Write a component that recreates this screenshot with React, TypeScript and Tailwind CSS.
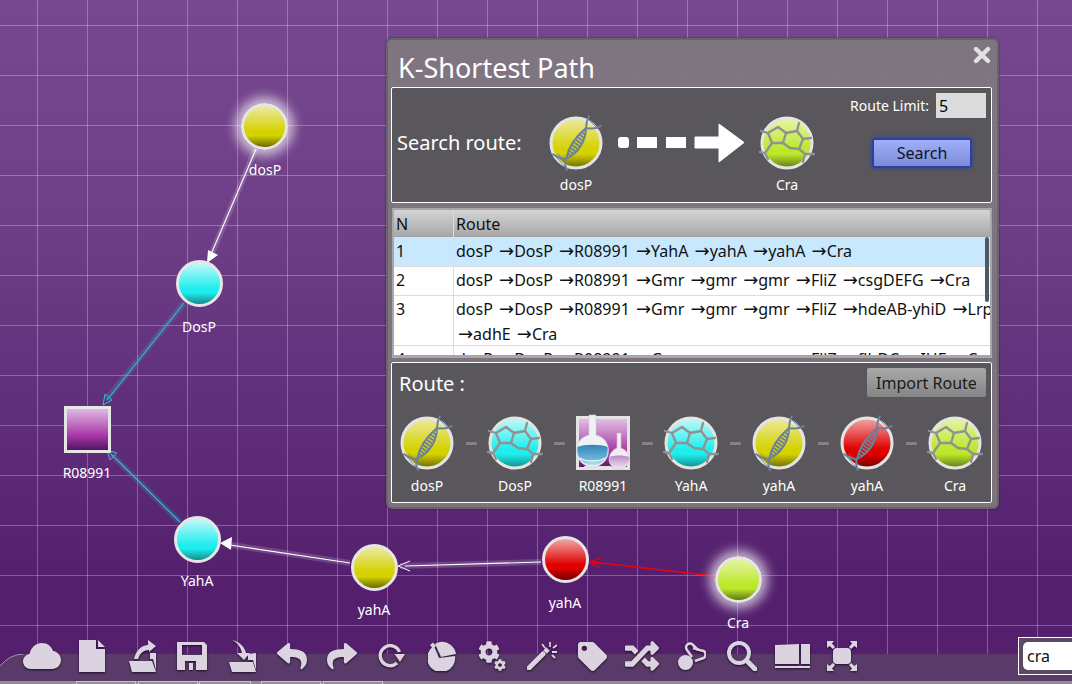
import React from 'react';
import { FaCog, FaRandom, FaReply, FaShare, FaTag } from 'react-icons/fa';

type Kind = 'gene' | 'protein';

const palette: Record<string, string[]> = {
  yellow: ['#ece9a4', '#d5d200', '#d5d200', '#6b6800'],
  cyan: ['#c4f8f8', '#20eeee', '#20eeee', '#148a8a'],
  red: ['#f0a8a8', '#e00000', '#e00000', '#700000'],
  lime: ['#e6f4a8', '#bce82c', '#bce82c', '#5f7a10'],
};

const DnaOverlay = ({ id }: { id: string }) => (
  <g fill="none" stroke="#6d8098" strokeWidth="1.9" strokeLinecap="round">
    <defs>
      <pattern id={id} width="3.2" height="3.2" patternUnits="userSpaceOnUse" patternTransform="rotate(35)">
        <rect width="3.2" height="1" fill="#6d8098" />
      </pattern>
    </defs>
    <path d="M17 43C19 33 26 21 37 12C37 24 30 37 17 43Z" fill={`url(#${id})`} stroke="none" />
    <path d="M4 38C9 42 13 43 17 43C19 33 26 21 37 12C42 13 47 13 52 10" />
    <path d="M18 54C16 50 16 46 17 43C30 37 37 24 37 12C37 8 38 4 40 0" />
    <path d="M6 40L17 52M9 38L19 49" strokeWidth="0.9" />
    <path d="M40 4L49 13" strokeWidth="0.9" />
  </g>
);

const HexOverlay = () => (
  <g fill="none" stroke="#909192" strokeWidth="2.3" strokeLinejoin="round" strokeLinecap="round">
    <path d="M8 17L18 11L26 17L23 27L12 27Z" />
    <path d="M26 17L37 15L43 23L39 33L30 32L23 27" />
    <path d="M8 17L1 15M37 15L39 7M43 23L51 22M12 27L5 37L0 36M5 37L8 43M39 33L45 38L54 38M45 38L43 46" />
  </g>
);

const PathwayIcon = ({ color, kind, uid }: { color: string; kind: Kind; uid: string }) => {
  const c = palette[color];
  return (
    <svg width="54" height="54" viewBox="0 0 54 54" className="overflow-visible">
      <defs>
        <linearGradient id={`g-${uid}`} x1="0" y1="0" x2="0" y2="1">
          <stop offset="0" stopColor={c[0]} />
          <stop offset="0.62" stopColor={c[1]} />
          <stop offset="0.72" stopColor={c[2]} />
          <stop offset="1" stopColor={c[3]} />
        </linearGradient>
      </defs>
      <circle cx="27" cy="27" r="25" fill={`url(#g-${uid})`} stroke="#e4e4e4" strokeWidth="3" />
      {kind === 'gene' ? <DnaOverlay id={`h-${uid}`} /> : <HexOverlay />}
    </svg>
  );
};

const FlaskIcon = () => (
  <svg width="54" height="54" viewBox="0 0 54 54" className="overflow-visible">
    <defs>
      <linearGradient id="reaction-bg" x1="0" y1="0" x2="0" y2="1">
        <stop offset="0" stopColor="#e6c4e6" />
        <stop offset="0.65" stopColor="#a53aa5" />
        <stop offset="1" stopColor="#5a1a60" />
      </linearGradient>
      <linearGradient id="flask-liquid" x1="0" y1="0" x2="0" y2="1">
        <stop offset="0" stopColor="#2f86b8" />
        <stop offset="0.7" stopColor="#70b4d8" />
        <stop offset="1" stopColor="#cfe6f0" />
      </linearGradient>
      <linearGradient id="flask-purple" x1="0" y1="0" x2="0" y2="1">
        <stop offset="0" stopColor="#b888c4" />
        <stop offset="1" stopColor="#efe0f0" />
      </linearGradient>
    </defs>
    <rect x="1.5" y="1.5" width="51" height="51" fill="url(#reaction-bg)" stroke="#e4e4e4" strokeWidth="3" />
    <path d="M8 50H36L34 54H10Z" fill="#e4e4e4" />
    <path d="M13 -1H20V19C28 21 32.5 27 32.5 35C32.5 44 25 51 16.5 51C8 51 0.5 44 0.5 35C0.5 27 5 21 13 19Z" fill="#eef2f5" stroke="#c8d0d6" strokeWidth="0.6" />
    <path d="M1.5 31C8 28 25 28 31.5 31C33 42 25 49.5 16.5 49.5C8 49.5 0 42 1.5 31Z" fill="url(#flask-liquid)" />
    <path d="M4 42C9 46 24 46 29 42" fill="none" stroke="#e8f4fa" strokeWidth="1.4" />
    <path d="M41 17H45V32C50 34 53.5 38 53.5 43C53.5 49 48.5 53 43 53C37.5 53 33 49 33 43C33 38 36.5 34 41 32Z" fill="#f3ecf4" stroke="#cdbfd2" strokeWidth="0.6" />
    <path d="M33.5 41C38 39 48 39 53 41C53.5 48 48 52 43 52C38 52 33 48 33.5 41Z" fill="url(#flask-purple)" />
  </svg>
);

const canvasNodes = [
  { label: 'dosP', pos: 'left-[241px] top-[103px]', fill: 'bg-[linear-gradient(#ece9a4,#d5d200_62%,#d5d200_72%,#6b6800)]', glow: true, labelPos: 'left-[225px] top-[160px]' },
  { label: 'DosP', pos: 'left-[176px] top-[260px]', fill: 'bg-[linear-gradient(#c4f8f8,#20eeee_62%,#20eeee_72%,#148a8a)]', glow: false, labelPos: 'left-[159px] top-[317px]' },
  { label: 'YahA', pos: 'left-[174px] top-[516px]', fill: 'bg-[linear-gradient(#c4f8f8,#20eeee_62%,#20eeee_72%,#148a8a)]', glow: false, labelPos: 'left-[157px] top-[571px]' },
  { label: 'yahA', pos: 'left-[351px] top-[544px]', fill: 'bg-[linear-gradient(#ece9a4,#d5d200_62%,#d5d200_72%,#6b6800)]', glow: false, labelPos: 'left-[334px] top-[600px]' },
  { label: 'yahA', pos: 'left-[542px] top-[536px]', fill: 'bg-[linear-gradient(#f0a8a8,#e00000_62%,#e00000_72%,#700000)]', glow: false, labelPos: 'left-[525px] top-[593px]' },
  { label: 'Cra', pos: 'left-[715px] top-[556px]', fill: 'bg-[linear-gradient(#e6f4a8,#bce82c_62%,#bce82c_72%,#5f7a10)]', glow: true, labelPos: 'left-[698px] top-[613px]' },
];

const Edges = () => (
  <svg width="1072" height="684" className="absolute inset-0" fill="none">
    <g strokeOpacity="0.16" strokeWidth="6">
      <path d="M256 148L210 258" stroke="#fff" />
      <path d="M184 303L106 400" stroke="#40d0e0" />
      <path d="M180 522L110 453" stroke="#40d0e0" />
      <path d="M350 563L225 544" stroke="#fff" />
      <path d="M541 562L400 566" stroke="#fff" />
    </g>
    <path d="M256 149L212 252" stroke="#fff" strokeWidth="1.1" />
    <path d="M207 263L208 250L218 255Z" fill="#fff" />
    <path d="M184 303L107 400" stroke="#1fc6d6" strokeWidth="1.1" />
    <path d="M103 405L105 394L112 400Z" stroke="#1fc6d6" />
    <path d="M180 522L111 454" stroke="#1fc6d6" strokeWidth="1.1" />
    <path d="M107 450L117 453L110 460Z" stroke="#1fc6d6" />
    <path d="M350 563L230 545" stroke="#fff" strokeWidth="1.1" />
    <path d="M220 543L232 537L231 550Z" fill="#fff" />
    <path d="M541 562L405 566" stroke="#fff" strokeWidth="1.1" />
    <path d="M398 566L410 561M398 566L410 571" stroke="#fff" />
    <path d="M714 576L592 562" stroke="#f00010" strokeWidth="1.3" />
    <path d="M589 562L601 558M589 562L600 568" stroke="#f00010" strokeWidth="1.2" />
  </svg>
);

const RouteNode = ({ label, color, kind, uid }: { label: string; color?: string; kind?: Kind; uid: string }) => (
  <div className="flex w-[54px] shrink-0 flex-col items-center">
    {color && kind ? <PathwayIcon color={color} kind={kind} uid={uid} /> : <FlaskIcon />}
    <span className="mt-[6px] whitespace-nowrap text-[14px] leading-[20px] text-white">{label}</span>
  </div>
);

const routeSteps = [
  { label: 'dosP', color: 'yellow', kind: 'gene' as Kind },
  { label: 'DosP', color: 'cyan', kind: 'protein' as Kind },
  { label: 'R08991' },
  { label: 'YahA', color: 'cyan', kind: 'protein' as Kind },
  { label: 'yahA', color: 'yellow', kind: 'gene' as Kind },
  { label: 'yahA', color: 'red', kind: 'gene' as Kind },
  { label: 'Cra', color: 'lime', kind: 'protein' as Kind },
];

const rows = [
  { n: '1', cls: 'h-[30px] bg-[#c8e8fe] leading-[28px]', text: 'dosP →DosP →R08991 →YahA →yahA →yahA →Cra' },
  { n: '2', cls: 'h-[29px] bg-white leading-[26px]', text: 'dosP →DosP →R08991 →Gmr →gmr →gmr →FliZ →csgDEFG →Cra' },
  { n: '3', cls: 'h-[50px] bg-white leading-[26px]', text: 'dosP →DosP →R08991 →Gmr →gmr →gmr →FliZ →hdeAB-yhiD →Lrp', more: '→adhE →Cra' },
  { n: '4', cls: 'h-[30px] bg-white leading-[26px]', text: 'dosP →DosP →R08991 →Gmr →gmr →gmr →FliZ →flhDC →IHF →Cra' },
];

// the arrows in the route strings come from a wider face than the body text
const RouteText = ({ text }: { text: string }) => (
  <>
    {text.split('→').map((part, i) => (
      <React.Fragment key={i}>
        {i > 0 && <span className="ml-[2px] font-['DejaVu_Sans',sans-serif] text-[18px]">→</span>}
        {part}
      </React.Fragment>
    ))}
  </>
);

const KShortestDialog = () => (
  <div className="absolute left-[386px] top-[38px] flex h-[471px] w-[613px] flex-col rounded-[6px] border-2 border-[#68646a] bg-[rgba(128,120,128,0.94)] pl-[3px] pr-[5px] shadow-[0_0_2px_rgba(0,0,0,0.6)]">
    <div className="relative h-[47px] shrink-0">
      <h1 className="absolute left-[7px] top-[10px] text-[27px] font-normal leading-[36px] text-white">K-Shortest Path</h1>
      <svg width="18" height="18" viewBox="0 0 18 18" className="absolute right-[1px] top-[6px]">
        <path d="M3 3L15 15M15 3L3 15" stroke="#e4e0e4" strokeWidth="4.4" strokeLinecap="round" />
      </svg>
    </div>

    <section className="relative flex h-[116px] shrink-0 items-start rounded-[2px] border border-white bg-[#59575b]">
      <span className="ml-[5px] mt-[40px] w-[152px] text-[20px] leading-[30px] text-white">Search route:</span>
      <div className="mt-[28px] flex w-[54px] flex-col items-center">
        <PathwayIcon color="yellow" kind="gene" uid="from" />
        <span className="mt-[5px] text-[14px] leading-[20px] text-white">dosP</span>
      </div>
      <svg width="128" height="42" viewBox="0 0 128 42" className="ml-[14px] mt-[34px] shrink-0">
        <rect x="1" y="15" width="11" height="11" rx="3" fill="#fff" />
        <rect x="20" y="15" width="20" height="11" fill="#fff" />
        <rect x="49" y="15" width="20" height="11" fill="#fff" />
        <path d="M78 15H102V2L127 20.5L102 40V26H78Z" fill="#fff" stroke="#fff" strokeLinejoin="round" />
      </svg>
      <div className="ml-[15px] mt-[28px] flex w-[54px] flex-col items-center">
        <PathwayIcon color="lime" kind="protein" uid="to" />
        <span className="mt-[5px] text-[14px] leading-[20px] text-white">Cra</span>
      </div>
      <div className="ml-auto mr-[5px] mt-[5px] flex w-[136px] flex-col items-end">
        <div className="flex items-center">
          <span className="mr-[7px] whitespace-nowrap text-[14px] leading-[25px] text-white">Route Limit:</span>
          <input readOnly value="5" className="h-[25px] w-[50px] bg-[#dcdcdc] pl-[3px] text-[16px] text-black outline-none" />
        </div>
        <button className="mr-[14px] mt-[20px] h-[30px] w-[100px] rounded-[3px] border-2 border-[#2c40a4] bg-[linear-gradient(#9fb0f8,#7c8cdc)] text-[16px] leading-none text-[#10131f] shadow-[0_0_4px_#2c40a4]">
          Search
        </button>
      </div>
    </section>

    <section className="ml-[1px] mt-[5px] h-[150px] shrink-0 overflow-hidden border-2 border-b-[3px] border-[#a8a6a8] bg-white text-[16px] text-[#111]">
      <div className="relative h-full overflow-hidden">
        <div className="flex h-[27px] items-start border-b border-[#a0a0a0] bg-[linear-gradient(#d4d4d4,#a8a8a8)]">
          <span className="w-[60px] border-r border-[#dcdcdc] pl-[2px] leading-[28px]">N</span>
          <span className="pl-[2px] leading-[28px]">Route</span>
        </div>
        {rows.map((row) => (
          <div key={row.n} className={`flex border-b border-[#dcdcdc] ${row.cls}`}>
            <span className="w-[60px] shrink-0 border-r border-[#dcdcdc] pl-[2px]">{row.n}</span>
            <div className="whitespace-nowrap pl-[2px] [&>p]:h-[25px]">
              <p><RouteText text={row.text} /></p>
              {row.more && <p><RouteText text={row.more} /></p>}
            </div>
          </div>
        ))}
        <div className="absolute right-[1px] top-[27px] h-[65px] w-[4px] rounded-[2px] bg-[#4e5a66]" />
      </div>
    </section>

    <section className="mt-[4px] h-[141px] shrink-0 rounded-[2px] border border-white bg-[#59575b]">
      <div className="flex h-[53px] items-start justify-between pl-[7px] pr-[5px] pt-[5px]">
        <span className="pt-[1px] text-[20px] leading-[30px] text-white">Route :</span>
        <button className="h-[29px] w-[119px] rounded-[2px] bg-[linear-gradient(#a9a9a9,#858585)] text-[16px] leading-none text-[#1a1a1a]">
          Import Route
        </button>
      </div>
      <div className="flex items-start pl-[8px]">
        {routeSteps.map((step, i) => (
          <React.Fragment key={i}>
            {i > 0 && <div className="mx-[11.5px] mt-[25.5px] h-[3px] w-[11px] shrink-0 rounded-[1px] bg-[#848286]" />}
            <RouteNode {...step} uid={`route-${i}`} />
          </React.Fragment>
        ))}
      </div>
    </section>
  </div>
);

const CloudIcon = () => (
  <svg width="38" height="26" viewBox="0 0 38 26" fill="currentColor">
    <path d="M8 26C3.5 26 0 22.5 0 18.5C0 14.5 3 11.5 6.5 11C7.5 4.5 13 0 19 0C24.5 0 28.5 3.5 30 8C34.5 8.5 38 12.5 38 17C38 22 34 26 29 26Z" />
  </svg>
);
const FileIcon = () => (
  <svg width="26" height="32" viewBox="0 0 26 32" fill="currentColor">
    <path d="M0 0H17V9H26V32H0Z" />
    <path d="M19 0L26 7H19Z" />
  </svg>
);
const OpenFolderIcon = () => (
  <svg width="27" height="32" viewBox="0 0 27 32" fill="currentColor">
    <path d="M5 19C7 10 13 5 19 5V0L27 6L20 12V10C15 10 11 13 9 19Z" />
    <path d="M21 13H27V30L24 19H21Z" />
    <path d="M0 21H23L27 32H3Z" />
  </svg>
);
const SaveIcon = () => (
  <svg width="30" height="28" viewBox="0 0 30 28" fill="currentColor" fillRule="evenodd">
    <path d="M0 0H27L30 3V28H0ZM5 3V13H25V3ZM8 19V28H19V19Z" />
    <rect x="12" y="21" width="4" height="7" />
  </svg>
);
const ImportFolderIcon = () => (
  <svg width="27" height="32" viewBox="0 0 27 32" fill="currentColor">
    <path d="M3 0C12 2 16 8 17 13H21L15 20L8 13H13C12 8 9 3 3 0Z" />
    <path d="M19 14L27 13V30L24 20H19Z" />
    <path d="M0 22H24L27 32H3Z" />
  </svg>
);
const RotateIcon = () => (
  <svg width="28" height="24" viewBox="0 0 28 24" fill="none" stroke="currentColor" strokeWidth="3.4">
    <path d="M19 19A10 10 0 1 1 21.5 8" />
    <path d="M16.5 10H27L22 18Z" fill="currentColor" stroke="none" />
  </svg>
);
const PieIcon = () => (
  <svg width="28" height="30" viewBox="0 0 28 30" fill="currentColor">
    <path d="M12 1A14 14 0 0 1 28 13L13 16L7 3Q9 1.5 12 1Z" />
    <path d="M6 5L11 17L27 15A14 14 0 1 1 6 5Z" />
    <path d="M2 4L5 1.5L8 5L5 8Z" />
  </svg>
);
const CogsIcon = () => (
  <div className="relative h-[30px] w-[28px]">
    <FaCog size={22} className="absolute left-0 top-0" />
    <FaCog size={12} className="absolute bottom-0 right-0" />
  </div>
);
const WandIcon = () => (
  <svg width="30" height="28" viewBox="0 0 30 28" fill="none" stroke="currentColor">
    <path d="M2 26L16 12" strokeWidth="5" strokeLinecap="round" />
    <path d="M18 10L21 7" strokeWidth="5" />
    <path d="M23 0V5M30 3L26 6M25 10H30M25 13L28 16M15 2L18 6" strokeWidth="1.8" />
  </svg>
);
const LinkIcon = () => (
  <svg width="28" height="28" viewBox="0 0 28 28" fill="none" stroke="currentColor" strokeWidth="2.6">
    <circle cx="7.5" cy="20.5" r="7.5" fill="currentColor" stroke="none" />
    <path d="M14 15L9 8A3.6 3.6 0 0 1 15 3L20 8" />
    <path d="M15 6L23 8.5A4 4 0 0 1 24 16.5L17 19" />
  </svg>
);
const SearchIcon = () => (
  <svg width="30" height="30" viewBox="0 0 30 30" fill="none" stroke="currentColor">
    <circle cx="12" cy="12" r="10" strokeWidth="4" />
    <path d="M19.5 19.5L28 28" strokeWidth="5" strokeLinecap="round" />
  </svg>
);
const BookIcon = () => (
  <svg width="35" height="24" viewBox="0 0 35 24" fill="currentColor">
    <path d="M0 1L24 0V20H0Z" />
    <path d="M26 0H35V20H26Z" />
    <rect y="22" width="35" height="2" />
  </svg>
);
const FullscreenIcon = () => (
  <svg width="30" height="30" viewBox="0 0 30 30" fill="currentColor">
    <rect x="6" y="7" width="18" height="16" rx="4" />
    <path d="M0 0H7L5 2.5L8 6L6 8L2.5 5L0 7ZM30 0V7L27.5 5L24 8L22 6L25 2.5L23 0ZM0 30V23L2.5 25L6 22L8 24L5 27.5L7 30ZM30 30H23L25 27.5L22 24L24 22L27.5 25L30 23Z" />
  </svg>
);

const tools = [
  <CloudIcon />,
  <FileIcon />,
  <OpenFolderIcon />,
  <SaveIcon />,
  <ImportFolderIcon />,
  <FaReply size={30} />,
  <FaShare size={30} />,
  <RotateIcon />,
  <PieIcon />,
  <CogsIcon />,
  <WandIcon />,
  <FaTag size={29} />,
  <FaRandom size={34} />,
  <LinkIcon />,
  <SearchIcon />,
  <BookIcon />,
  <FullscreenIcon />,
];

const Toolbar = () => (
  <>
    <svg width="1072" height="27" className="absolute bottom-[3px] left-0" fill="none">
      <path d="M0 12Q10 0 24 0H1072V27H0Z" fill="#5a3a68" />
      <path d="M0 12Q10 0 24 0" stroke="#a890b0" />
    </svg>
    <div className="absolute bottom-[12px] left-[17px] flex h-[32px] items-center text-[#dcd3e0]">
      {tools.map((tool, i) => (
        <div key={i} className="flex w-[50px] items-center justify-center drop-shadow-[0_1px_1px_rgba(20,10,30,0.9)]">
          {tool}
        </div>
      ))}
    </div>
    <div className="absolute bottom-0 left-0 flex h-[3px] w-full bg-[#909090] pl-[75px]">
      <div className="ml-[1px] w-[60px] border-x border-t border-[#c8c8c8]" />
      <div className="ml-[2px] w-[60px] border-x border-t border-[#c8c8c8]" />
      <div className="ml-[1px] w-[52px] border-x border-t border-[#c8c8c8]" />
      <div className="ml-[10px] w-[60px] border-x border-t border-[#c8c8c8]" />
      <div className="ml-[2px] w-[60px] border-x border-t border-[#c8c8c8]" />
    </div>
    <div className="absolute left-[1018px] top-[637px] h-[38px] w-[54px] border-y border-l border-white bg-[#5a4a66] py-[4px] pl-[4px]">
      <div className="h-full rounded-l-[5px] bg-white pl-[4px] text-[16px] leading-[28px] text-[#111]">cra</div>
    </div>
  </>
);

export default function App() {
  return (
    <div className="relative h-[684px] w-[1072px] overflow-hidden bg-[linear-gradient(#774890,#6f4088_30%,#54206e_85%)] font-['Noto_Sans',sans-serif]">
      <div className="absolute inset-0 bg-[linear-gradient(to_right,rgba(255,255,255,0.27)_1px,transparent_1px),linear-gradient(to_bottom,rgba(255,255,255,0.27)_1px,transparent_1px)] bg-[size:50px_50px] bg-[position:37px_25px]" />
      <Edges />
      {canvasNodes.map((node, i) => (
        <React.Fragment key={i}>
          <div className={`absolute h-[47px] w-[47px] rounded-full border-[3px] border-[#e6e6e6] ${node.pos} ${node.fill} ${node.glow ? 'shadow-[0_0_11px_6px_rgba(255,255,255,0.65)]' : ''}`} />
          <span className={`absolute w-[80px] text-center text-[14px] leading-[20px] text-white ${node.labelPos}`}>{node.label}</span>
        </React.Fragment>
      ))}
      <div className="absolute left-[64px] top-[406px] h-[47px] w-[47px] border-[3px] border-[#e6e6e6] bg-[linear-gradient(#e0b8e0,#a838a8_65%,#4f1460)]" />
      <span className="absolute left-[47px] top-[463px] w-[80px] text-center text-[14px] leading-[20px] text-white">R08991</span>
      <KShortestDialog />
      <Toolbar />
    </div>
  );
}
